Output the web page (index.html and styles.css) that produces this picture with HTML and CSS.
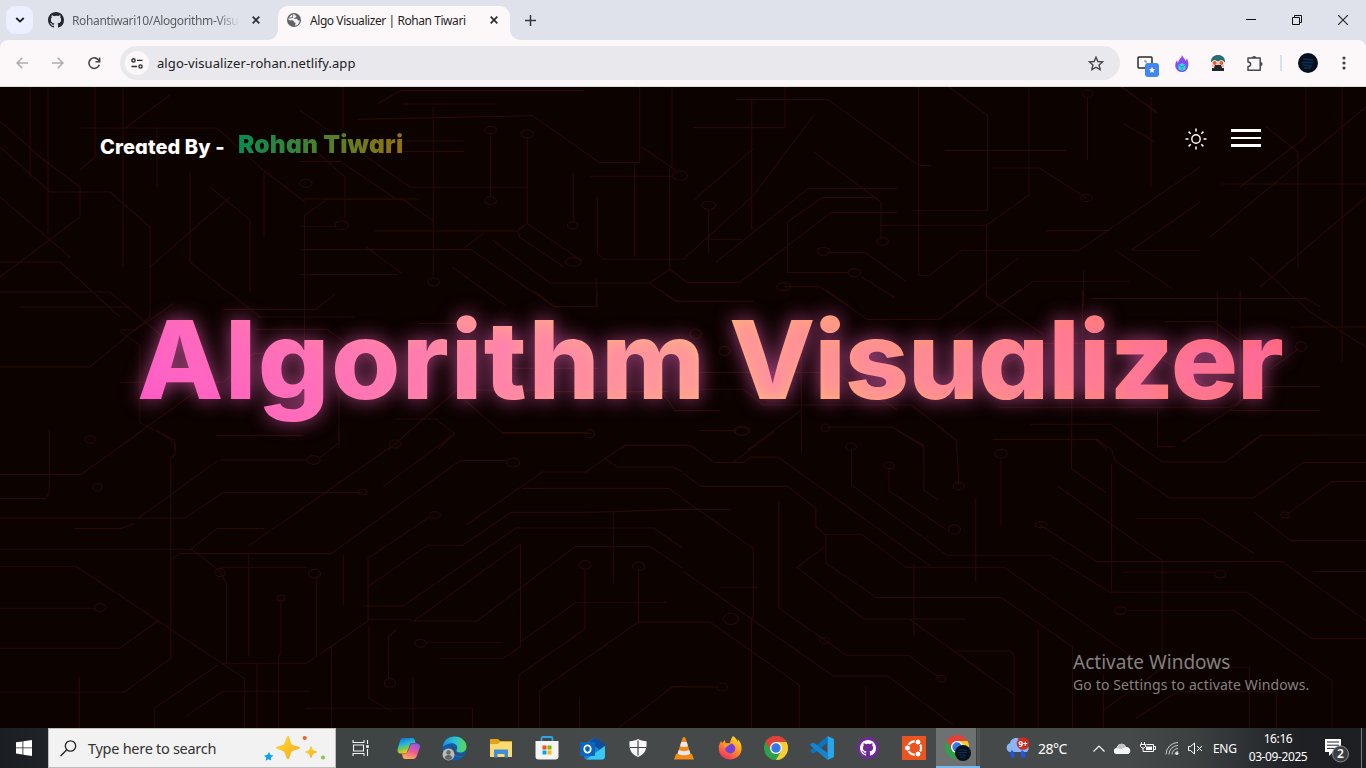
FILE: index.html
```html
<!DOCTYPE html>
<html lang="en">
<head>
<meta charset="utf-8">
<title>Algo Visualizer | Rohan Tiwari</title>
<link rel="stylesheet" href="styles.css">
</head>
<body>
<svg class="defs" width="0" height="0">
  <symbol id="chrome" viewBox="0 0 24 24">
    <circle cx="12" cy="12" r="12" fill="#2da04a"/>
    <path d="M1.6 6A12 12 0 0 1 22.4 6L12 12z" fill="#df4237"/><path d="M1.6 6L7 15l5-3V6z" fill="#df4237"/>
    <path d="M22.4 6A12 12 0 0 1 12 24l5.2-9L12 6z" fill="#fbcb35"/><path d="M12 6h10.4L12 12z" fill="#fbcb35"/>
    <path d="M1.6 6A12 12 0 0 1 22.4 6H12z" fill="#df4237"/>
    <circle cx="12" cy="12" r="6" fill="#fff"/><circle cx="12" cy="12" r="4.7" fill="#3478e8"/>
  </symbol>
  <symbol id="github" viewBox="0 0 16 16"><path fill-rule="evenodd" d="M8 0C3.58 0 0 3.58 0 8c0 3.54 2.29 6.53 5.47 7.59.4.07.55-.17.55-.38 0-.19-.01-.82-.01-1.49-2.01.37-2.53-.49-2.69-.94-.09-.23-.48-.94-.82-1.13-.28-.15-.68-.52-.01-.53.63-.01 1.08.58 1.23.82.72 1.21 1.87.87 2.33.66.07-.52.28-.87.51-1.07-1.78-.2-3.64-.89-3.64-3.95 0-.87.31-1.59.82-2.15-.08-.2-.36-1.02.08-2.12 0 0 .67-.21 2.2.82A7.65 7.65 0 0 1 8 3.86c.68 0 1.36.09 2 .27 1.53-1.04 2.2-.82 2.2-.82.44 1.1.16 1.92.08 2.12.51.56.82 1.27.82 2.15 0 3.07-1.87 3.75-3.65 3.95.29.25.54.73.54 1.48 0 1.07-.01 1.93-.01 2.2 0 .21.15.46.55.38A8.01 8.01 0 0 0 16 8c0-4.42-3.58-8-8-8z"/></symbol>
  <symbol id="avatar" viewBox="0 0 20 20"><circle cx="10" cy="10" r="10" fill="#07101d"/><path d="M5 6l10 1M4 9.500h11M5 12l9 1M6 15h7" stroke="#0c3157" stroke-width="1.300" fill="none"/></symbol>
</svg>

<header class="tabstrip">
  <div class="tab-search"><svg width="10" height="6" viewBox="0 0 10 6"><path d="M1.3 1l3.7 3.6L8.7 1" fill="none" stroke="#1b1b1f" stroke-width="1.8"/></svg></div>
  <div class="tab inactive">
    <svg class="fav" width="16" height="16"><use href="#github" fill="#24292f"/></svg>
    <span class="tab-title fade">Rohantiwari10/Alogorithm-Visu</span>
    <svg class="close" width="8" height="8" viewBox="0 0 8 8"><path d="M.7.7l6.6 6.6M7.3.7L.7 7.3"/></svg>
  </div>
  <div class="tab active">
    <svg class="fav" width="14" height="14" viewBox="0 0 14 14"><circle cx="7" cy="7" r="7" fill="#5f6368"/><path d="M7 1.2c2 .4 1 1.5 2.4 2.1.2 1.6-1.8 1-2.6 2 .8 1.1 3-.2 3.6 1.3.6 1 1.2.9 2.2.8.2 2.5-2 5-4.500 5.300C8 11 9 10.500 8.400 9.700 7 9.500 6.600 8.800 6.700 7.700 5.500 7.300 4 7.600 1.500 6.900 1.600 4.500 3 1.700 7 1.200z" fill="#f3f1f3"/><path d="M5.500 1.500c1 1-.8 1.600.4 2.600C4.500 5.500 3 4.500 2 5" stroke="#5f6368" fill="none"/></svg>
    <span class="tab-title">Algo Visualizer | Rohan Tiwari</span>
    <svg class="close" width="8" height="8" viewBox="0 0 8 8"><path d="M.7.7l6.600 6.600M7.300.7L.7 7.300"/></svg>
  </div>
  <svg class="newtab" width="11" height="11" viewBox="0 0 11 11"><path d="M5.500 0v11M0 5.500h11" stroke="#36383d" stroke-width="1.500"/></svg>
  <div class="window-controls">
    <svg width="10" height="10"><path d="M0 4.500h10" stroke="#111"/></svg>
    <svg width="10" height="10" fill="none" stroke="#111"><path d="M.5 2.500h7v7h-7zM2.500 2.500v-2h7v7h-2"/></svg>
    <svg width="10" height="10"><path d="M0 0l10 10M10 0L0 10" stroke="#222" stroke-width="1.100"/></svg>
  </div>
</header>

<nav class="toolbar">
  <svg class="nav-back" width="12" height="12" viewBox="0 0 12 12"><path d="M12 6H1M6.300.7L1 6l5.300 5.300" fill="none" stroke="#adabae" stroke-width="1.500"/></svg>
  <svg class="nav-fwd" width="12" height="12" viewBox="0 0 12 12"><path d="M0 6h11M5.700.7L11 6l-5.300 5.300" fill="none" stroke="#adabae" stroke-width="1.500"/></svg>
  <svg class="nav-reload" width="13" height="13" viewBox="0 0 13 13"><path d="M11.300 7.700A5.300 5.300 0 1 1 10.800 3.400L12 4.700" fill="none" stroke="#44464b" stroke-width="1.600"/><path d="M12.400.4v5H7.500V4h3.400V.4z" fill="#44464b"/></svg>
  <div class="omnibox">
    <div class="site-info"><svg width="12" height="11" viewBox="0 0 12 11" fill="none" stroke="#2b2c30" stroke-width="1.400"><circle cx="2.500" cy="2.400" r="1.600"/><path d="M6 2.400h5.500M.5 8.500H6"/><circle cx="9.500" cy="8.500" r="1.600"/></svg></div>
    <span class="url">algo-visualizer-rohan.netlify.app</span>
    <svg class="star" width="16" height="15" viewBox="0 0 16 15"><path d="M8 1.200l1.900 4.300 4.700.4-3.500 3.100 1 4.600L8 11.200l-4.100 2.400 1-4.600L1.400 5.900l4.700-.4z" fill="none" stroke="#434549" stroke-width="1.400"/></svg>
  </div>
  <div class="extensions">
    <svg width="22" height="22" viewBox="0 0 22 22"><rect x="1" y="3" width="14" height="11" rx="1" fill="none" stroke="#252b29" stroke-width="1.500"/><path d="M7 7h2v2" stroke="#777" fill="none"/><rect x="8" y="9" width="14" height="14" rx="3" fill="#4285f4"/><path d="M15 13l.9 2.100 2.200.2-1.700 1.500.5 2.200-1.900-1.200-1.900 1.200.5-2.200-1.700-1.500 2.200-.2z" fill="#fff"/></svg>
    <svg width="14" height="17" viewBox="0 0 14 17"><path d="M7 0c1 3 3 3 3.500 6 1-1 1-2 1.500-3 .5 3 2 4 1.200 8C12.600 15 10 17 7 17S1 15 .3 11.500C0 9 1 7 1.700 5.500 2.500 6 2.300 7 3 8 3.500 4 6.500 3.500 7 0z" fill="#8a4cf2"/><path d="M7 8l3.600 2v4L7 16.200 3.400 14v-4z" fill="#35d7da"/><path d="M3.400 10L7 12v4.200M7 12l3.600-2" stroke="#269bca" fill="none"/></svg>
    <svg width="14" height="16" viewBox="0 0 14 16"><path d="M0 7C0 2 3 0 7 0s7 2 7 7z" fill="#276d77"/><path d="M1 6h12v6H1z" fill="#efb294"/><circle cx="3.700" cy="8" r="2.500" fill="#f0582c" stroke="#eee"/><circle cx="10.300" cy="8" r="2.500" fill="#f0582c" stroke="#eee"/><path d="M4 10h6l1 3h2v3H1v-3h2z" fill="#1f2629"/></svg>
    <svg width="16" height="17" viewBox="0 0 16 17"><path d="M1 3h12.200v12.300H1v-3.800c3.500.2 3.500-4.500 0-4.500z" fill="none" stroke="#45474c" stroke-width="1.500" stroke-linejoin="round"/><path d="M5 3a2.100 2.100 0 0 1 4.200 0zM13.500 7a2.100 2.100 0 0 1 0 4.200z" fill="#45474c"/></svg>
  </div>
  <i class="divider"></i>
  <svg class="profile" width="20" height="20"><use href="#avatar"/></svg>
  <svg class="kebab" width="4" height="14" fill="#3f4146"><circle cx="2" cy="2" r="1.600"/><circle cx="2" cy="7" r="1.600"/><circle cx="2" cy="12" r="1.600"/></svg>
</nav>

<main class="page">
  <svg class="circuit" width="1366" height="641" viewBox="0 0 1366 641">
    <g transform="translate(0 343) scale(.4356 .3333)">
      <path d="M0 133H186L328 0M113 0V190L104 206H0M358 0L392 30 402 40V75L392 82V685L285 787H0M495 16H695M778 0V38L735 82M505 90H705M500 92L318 264M0 264H424L512 188H832M170 296H275L310 280M0 358H440L505 425 520 460V700M437 358L498 296H610M568 350L900 48M410 371H760L1057 91H1163M0 409H175L562 746V894M0 535H218M0 655H275L365 570M392 390L410 371M505 412H705M571 370V680M640 894V680L645 670V510M727 445V680L703 700H512M590 700V894M182 894V740M354 894V835L500 705M735 672L845 572V384L985 262M845 470L982 346H1062L1173 247H1350L1568 238M1070 285L1245 126H1345L1433 46H1568M1390 88L1418 111H1545L1568 125M1200 175H1535L1568 205M845 568H940L945 573H1095L1320 350H1492L1568 415M950 573L1195 342V650L1155 685H1010M835 528H925L1185 294H1500L1568 355M892 745V620L910 598M847 585V805L900 845M978 637H1155M1343 418V597L1191 735V894M1466 420V576H1568M1466 576L1239 782V894M1195 635L1323 517H1530M1408 245V460M1568 770H1545L1420 894M425 860L512 784H710M700 835H1085V894M761 650V894M948 745V894M1330 805V894M1150 8H1350M880 170L1045 10M788 375V525"/>
      <ellipse cx="907" cy="42" rx="14" ry="12"/><ellipse cx="1178" cy="98" rx="15" ry="13"/><ellipse cx="720" cy="90" rx="15" ry="13"/><ellipse cx="998" cy="255" rx="13" ry="10"/><ellipse cx="1343" cy="405" rx="14" ry="13"/><ellipse cx="1466" cy="409" rx="14" ry="13"/><ellipse cx="722" cy="431" rx="14" ry="13"/><ellipse cx="230" cy="533" rx="13" ry="12"/><ellipse cx="965" cy="640" rx="13" ry="12"/><ellipse cx="207" cy="28" rx="12" ry="11"/><ellipse cx="224" cy="172" rx="11" ry="11"/><ellipse cx="895" cy="759" rx="13" ry="13"/><ellipse cx="645" cy="504" rx="9" ry="9"/><ellipse cx="505" cy="428" rx="12" ry="12"/><ellipse cx="832" cy="186" rx="10" ry="9"/>
    </g>
    <g transform="translate(683 343) scale(.4356 .3333)">
      <path d="M0 45H15L72 97H115L210 5M115 97H140L155 81H218L570 410M0 130L42 169H240L305 235V290L328 315V400L445 503H730L894 650V894M0 238H110M0 207L161 355V560L157 570V894M220 215V535L375 676H517L590 745M0 424L345 738H470L620 885M0 576H62L267 765V894M272 0V65M387 62V165L607 376H843L980 487H1295L1445 626H1568M473 115V182L605 300M490 0L553 50V180L585 210M595 0L628 30 633 165M730 85V285M672 205V455M325 313H410L512 412H737L1030 680M325 350L262 412 415 567H650M520 568L760 793V894M620 663H750L760 675V793M715 28H950L985 60 990 90 1117 204H1310L1425 97H1568M1000 0L1100 96H1245L1325 15H1568M892 0V117L970 187M860 168L1100 392V715L965 840M984 100V487M820 285L950 395H1375L1568 572M1040 265H1190L1310 370M1010 427H1220M1020 541H1265L1490 752V894M1385 255L1490 155H1568M1310 245L1395 332H1568M1040 865L1135 785H1363V894M965 735V894M815 600V894M0 771H78M420 770V894M530 400V620M1110 712H1300V894M1145 35L1190 0M1448 425H1568M85 472H170"/>
      <ellipse cx="135" cy="4" rx="16" ry="12"/><ellipse cx="386" cy="51" rx="12" ry="12"/><ellipse cx="473" cy="106" rx="12" ry="10"/><ellipse cx="730" cy="71" rx="14" ry="13"/><ellipse cx="623" cy="298" rx="14" ry="14"/><ellipse cx="110" cy="567" rx="17" ry="17"/><ellipse cx="1233" cy="432" rx="13" ry="12"/><ellipse cx="1004" cy="542" rx="13" ry="12"/><ellipse cx="90" cy="771" rx="12" ry="12"/><ellipse cx="593" cy="746" rx="10" ry="10"/><ellipse cx="633" cy="168" rx="13" ry="11"/><ellipse cx="326" cy="632" rx="12" ry="10"/><ellipse cx="1382" cy="255" rx="10" ry="9"/><ellipse cx="822" cy="284" rx="14" ry="9"/>
    </g>
    <g transform="translate(300) scale(.574 .3333)">
      <path d="M135 50L175 11H495M180 51H340M75 0V145M0 70L192 301H395M100 97L405 86 522 227H592V0M232 60V570M332 140V330M396 150V410L380 430 382 450 460 540M396 410L490 520M0 488H298L442 658M285 485L320 438M0 563H170M8 658V385L47 337H180L232 402M0 223H70L165 333M476 260V405M505 268H650M648 0V235L644 245V547L675 587H765L925 377H1040M595 180L655 250M583 230V510M518 330V500L530 517H668L790 325 895 85M787 40V430M685 122H845V0M760 38H920L1078 235H1100M685 340L790 185M895 195L1012 345V455M712 368V500M708 457H770M725 525L885 305H1040M849 555V405L910 332H1005M1010 415H1196L1270 324V0M1130 0L1198 85V370H1065M1078 0V565L1095 567 1153 490H1357L1568 240M1372 30V220M1205 243H1288L1370 333M1123 190H1335M1196 415V625L1218 658M1218 655L1278 583H1445M1142 658L1250 515M849 557H955M920 497H985L1055 582M845 599H905L955 658M978 570L1035 630M644 547L608 588 655 643H790M608 588H435L335 458M516 658V575M1448 490L1568 345M1420 490L1520 605M1448 490H1568M1365 550V658M1430 0L1493 75M1435 110L1490 165M1300 431H1410M130 432H380M115 480L178 560M265 540L360 658M0 418H60M180 162H285M180 193H285"/>
      <ellipse cx="332" cy="129" rx="10" ry="11"/><ellipse cx="396" cy="141" rx="11" ry="12"/><ellipse cx="332" cy="341" rx="10" ry="12"/><ellipse cx="73" cy="415" rx="12" ry="13"/><ellipse cx="233" cy="585" rx="10" ry="12"/><ellipse cx="662" cy="266" rx="13" ry="14"/><ellipse cx="712" cy="355" rx="12" ry="12"/><ellipse cx="966" cy="557" rx="11" ry="12"/><ellipse cx="912" cy="493" rx="11" ry="12"/><ellipse cx="843" cy="599" rx="12" ry="12"/><ellipse cx="476" cy="525" rx="14" ry="13"/><ellipse cx="475" cy="415" rx="9" ry="11"/><ellipse cx="1370" cy="333" rx="10" ry="11"/><ellipse cx="1372" cy="20" rx="9" ry="11"/><ellipse cx="10" cy="289" rx="11" ry="12"/><ellipse cx="1015" cy="463" rx="10" ry="12"/>
    </g>
    <path d="M0 34L40 70 80 100V130L0 190M48 0V147M95 0V70L80 83M123 0V180M80 41H217L262 82 305 115M125 41L170 8M157 40V100M0 60L50 105H110L150 140V190M0 175H60L120 230M0 110L70 170M300 50L345 90V130M0 205H110L175 260M190 85V175L260 230H355M210 100L250 133V205M30 0V90M0 280H90L150 230V180L230 110M20 220H130M304 112H420M264 85V150"/>
    <g transform="translate(120 203) scale(.3827 .3333)"><path d="M0 277H270L350 190H480M0 120H40L140 40M0 125L52 165V398L143 450V480M0 470L215 290M270 58H510L560 15M482 0V340M350 118H540L720 260M572 475V310M250 437H480M700 480L880 300H1130M720 387H825L875 430M830 480L875 430M900 330L1000 430H1230M1310 480L1320 466H1490L1510 480M1140 305H1430M980 200L1030 235H1250M1450 362L1390 260M1450 362H1568M1080 0L1135 50H1247V0M1410 0L1455 34H1568M780 100H920"/><circle cx="1228" cy="431" r="12"/><circle cx="1504" cy="132" r="15"/></g>
    <g transform="translate(700 203) scale(.3954 .3333)"><path d="M0 34H135M0 298H110L160 345H535L648 450V480M256 150V480M120 480L256 360M0 422H90M320 411H485L565 465V480M320 0L422 88H605L705 0M723 0V18L870 135M810 0L645 140M967 0V190M990 25H1533L1568 50M1308 0V220M1366 0V340L1220 455M1175 95H1300L1420 200M0 247H340L500 360M755 352H1340L1430 290H1568M1340 362H1568M940 230V480M835 403H1040L1125 480M740 448H1000L1030 480M1157 362V470H1200M1370 480L1420 436H1568M645 300L870 160H1100L1300 300M1440 240L1515 175"/><ellipse cx="106" cy="422" rx="20" ry="14"/><circle cx="62" cy="183" r="14"/><circle cx="1520" cy="170" r="14"/><circle cx="317" cy="413" r="11"/></g>
    <path d="M1240 100L1306 50V0M1265 39L1298 65V180M1222 97H1366M1342 0V275M1151 10V100M1122 0L1157 26M1210 150L1366 20M1260 200L1366 110M1290 240H1366M1250 170L1310 225 1366 260"/>
  </svg>

  <div class="page-head">
    <div class="credit"><span class="by">Created By -</span><span class="author">Rohan Tiwari</span></div>
    <div class="page-tools">
      <svg width="22" height="22" viewBox="0 0 22 22" fill="none" stroke="#fff"><circle cx="11" cy="11" r="4.200" stroke-width="1.400"/><path d="M11 .5v3M11 18.500v3M.5 11h3M18.500 11h3M3.600 3.600l2.100 2.100M16.300 16.300l2.100 2.100M3.600 18.400l2.100-2.100M16.300 5.700l2.100-2.100" stroke-width="1.500"/></svg>
      <div class="burger"><i></i><i></i><i></i></div>
    </div>
  </div>
  <h1 class="hero"><span class="w1">Algorithm</span> <span class="w2">Visualizer</span></h1>
  <div class="activate"><p class="act-title">Activate Windows</p><p class="act-sub">Go to Settings to activate Windows.</p></div>
</main>

<footer class="taskbar">
  <div class="start"><svg width="16" height="16" viewBox="0 0 16 16" fill="#fff"><path d="M0 2.300l6.500-.9v6.100H0zM7.300 1.300L16 0v7.500H7.300zM0 8.300h6.500v6.200L0 13.600zM7.300 8.300H16V16l-8.700-1.300z"/></svg></div>
  <div class="search">
    <svg width="17" height="17" viewBox="0 0 17 17" fill="none" stroke="#222" stroke-width="1.300"><circle cx="10.500" cy="6" r="5.200"/><path d="M6.800 9.700L.6 16"/></svg>
    <span>Type here to search</span>
    <svg class="sparkles" width="62" height="26" viewBox="0 0 62 26"><defs><linearGradient id="gold" x2="1" y2="1"><stop stop-color="#ffdc3c"/><stop offset="1" stop-color="#f3a718"/></linearGradient></defs><path d="M24 1c1.600 0 2.200 6 3.600 8s8.400 2.200 8.400 3.700-7 2.300-8.400 4-2 7.600-3.600 7.600-2.500-6-4-7.600-8-2.300-8-4 6.500-1.700 8-3.700 2.400-8 4-8z" fill="url(#gold)"/><path d="M47 11c1 0 1 3 2 4s4 1.200 4 2.100-3 1.200-4 2.200-1 3.700-2 3.700-1.200-3-2.100-3.900-3.900-1-3.900-2 3-1 4-2 1-4.100 2-4.100z" fill="url(#gold)"/><path d="M5 17l1.500 3 3 .5-2.500 2 .2 3-2.700-1.300-3 1.600.8-3.100L0 20.500l3.200-.5z" fill="#08a5ee"/><circle cx="40.700" cy="3" r="2.100" fill="#f2622e"/><circle cx="59" cy="22.500" r="2" fill="#8bc34a"/></svg>
  </div>
  <div class="taskview"><svg width="18" height="16" viewBox="0 0 18 16" fill="none" stroke="#f2f2f2" stroke-width="1.100"><path d="M1 0v2.500h11V0M1 16v-2.500h11V16M1.500 5h10v6h-10zM15.500 0v4M15.500 9v7"/><path d="M14.200 5.200h2.600v2.600h-2.600z" fill="#fff" stroke="none"/></svg></div>
  <div class="apps">
    <div class="app"><svg width="23" height="21" viewBox="0 0 23 21"><defs><linearGradient id="cp1" x2=".3" y2="1"><stop stop-color="#1b62d8"/><stop offset=".45" stop-color="#21b8dc"/><stop offset=".75" stop-color="#85c945"/><stop offset="1" stop-color="#f5c820"/></linearGradient><linearGradient id="cp2" x1=".7" y1="0" x2=".3" y2="1"><stop stop-color="#9a55e8"/><stop offset=".5" stop-color="#ef5b92"/><stop offset="1" stop-color="#ffb152"/></linearGradient></defs><path d="M6 0h9c2 0 2.600 1 3 3l.5 2h-3c-2 0-2.500 1-3 3L10 14c-.5 1-1 1.500-3 1.500H4C1 15.500 0 13.500.8 10.500L3 3C3.500 1 4.500 0 6 0z" fill="url(#cp1)"/><path d="M17 5.500h2.500c3 0 4 2 3 5L20 17.500c-.8 2.400-2 3.500-4 3.500H8.500C6.500 21 6 20 5.500 18L5 15.700h2.500c2 0 3-1 3.500-3L13.500 7c.5-1.200 1.500-1.500 3.500-1.500z" fill="url(#cp2)"/></svg></div>
    <div class="app"><svg width="25" height="25" viewBox="0 0 25 25"><defs><linearGradient id="ed" y1=".3" x2="1" y2=".4"><stop stop-color="#1c8ed9"/><stop offset=".5" stop-color="#2bc3d4"/><stop offset="1" stop-color="#5bd657"/></linearGradient></defs><circle cx="12.500" cy="12.500" r="12" fill="#0f5cae"/><path d="M.8 11C1.500 4.500 6 .5 12.500.5c7 0 12 5 12 10 0 4-3 6-6.500 6-3 0-4-1-3.300-2.500C17 9 12 6.500 8 7.500 4 8 2 10 .8 11z" fill="url(#ed)"/><path d="M9 11c-2 6 3 11 9 10.500 3 0 5-2 6-4-4 2-11 1.500-11-3.500 0-3-2.500-4-4-3z" fill="#3d464c"/><path d="M9 11c-2 6 3 11 9 10.500 2 0 4-1 5-2.500-6 2-12 0-11.500-4z" fill="#126dbf"/><circle cx="6.500" cy="18.500" r="6" fill="#b9babb"/><circle cx="6.500" cy="16.500" r="2.200" fill="#666"/><path d="M2.800 22c0-4 7.400-4 7.400 0-2 2.500-5.500 2.500-7.400 0z" fill="#666"/></svg></div>
    <div class="app"><svg width="22" height="19" viewBox="0 0 22 19"><path d="M0 1c0-1 0-1 1-1h7l2 2h12v4H0z" fill="#e2a416"/><path d="M0 5h8l2-2h12v15H0z" fill="#fddb73"/><path d="M4 18.500v-8h14v8h-3.500V15h-7v3.500z" fill="#3d90d4"/></svg></div>
    <div class="app"><svg width="24" height="24" viewBox="0 0 24 24"><path d="M6.500 7V2.500c0-1 .6-1.500 1.500-1.500h8c1 0 1.500.5 1.500 1.500V7" fill="none" stroke="#27a9e1" stroke-width="1.800"/><path d="M.5 5h23v15.500a3 3 0 0 1-3 3h-17a3 3 0 0 1-3-3z" fill="#f4f4f4"/><path d="M7.500 9.500h4v4h-4z" fill="#f25022"/><path d="M12.500 9.500h4v4h-4z" fill="#7fba00"/><path d="M7.500 14.500h4v4h-4z" fill="#00a4ef"/><path d="M12.500 14.500h4v4h-4z" fill="#ffb900"/></svg></div>
    <div class="app"><svg width="25" height="23" viewBox="0 0 25 23"><path d="M4 7.500L15 .5l10 7V19c0 2-1 3.500-3 3.500H7c-2 0-3-1.500-3-3z" fill="#1583d3"/><path d="M9 5l11 8 5-4V7L15 .5z" fill="#0c4fa1"/><path d="M6 22.500L25 9v10c0 2-1 3.500-3 3.500z" fill="#3bc8f0"/><rect y="5" width="15" height="14" rx="1" fill="#0b64bd"/><ellipse cx="7.500" cy="12" rx="3.200" ry="3.700" fill="none" stroke="#fff" stroke-width="1.800"/></svg></div>
    <div class="app"><svg width="18" height="18" viewBox="0 0 18 18"><path d="M9 0c2.500 1.500 5 2 8.500 2.300C18 10 16.500 15 9 18 1.500 15 0 10 .5 2.300 4 2 6.500 1.500 9 0z" fill="#f7f7f7"/><path d="M9 1.500v15M1 8.500h16" stroke="#444848" stroke-width="1.200"/></svg></div>
    <div class="app"><svg width="20" height="23" viewBox="0 0 20 23"><path d="M2 17h16l2 5.500H0z" fill="#f68b13"/><path d="M8.500 1c.5-1.300 2.500-1.300 3 0L17 18c-3 2.500-11 2.500-14 0z" fill="#f28714"/><path d="M7.300 5h5.400l1.300 4.200c-2 1-6 1-8 0zM4.800 13c3 1.500 7.400 1.500 10.400 0l1.200 3.700c-4 2-8.800 2-12.800 0z" fill="#e9e9e9"/></svg></div>
    <div class="app"><svg width="24" height="24" viewBox="0 0 24 24"><defs><linearGradient id="ff" x1=".8" x2=".2" y2="1"><stop stop-color="#ffe226"/><stop offset=".45" stop-color="#ff9420"/><stop offset="1" stop-color="#f52668"/></linearGradient></defs><path d="M15 0c3 2 4 4 5 6 0-1 0-2-.3-3C23 6 24 10 23.500 14c-1 6-6 9.500-11 9.500C6 23.500.5 19 .7 12 .8 9 2 7 3 5l1 2 3-3 .5 3 4 .5C13 5 13 2 15 0z" fill="url(#ff)"/><circle cx="12.300" cy="12.500" r="5" fill="#7541de"/><path d="M6 8l7-1c-1 3-4 2-4.500 4.500C5.500 12 5 10 6 8z" fill="#ff9924"/></svg></div>
    <div class="app"><svg width="24" height="24"><use href="#chrome"/></svg></div>
    <div class="app"><svg width="24" height="24" viewBox="0 0 24 24"><path d="M17.500 0L24 3v18l-6.500 3z" fill="#27a6ee"/><path d="M17.500 0v7L3.500 17.600.3 16v-1.300z" fill="#0876bd"/><path d="M17.500 24v-7L3.500 6.400.3 8v1.300z" fill="#1684d1"/></svg></div>
    <div class="app"><svg width="22" height="22" viewBox="0 0 22 22"><circle cx="11" cy="11" r="11" fill="#6f2b94"/><svg x="3" y="3" width="16" height="16"><use href="#github" fill="#fff"/></svg></svg></div>
    <div class="app"><svg width="24" height="24" viewBox="0 0 24 24"><path d="M0 0h24v24H0z" fill="#e95420"/><circle cx="12.500" cy="12" r="6.600" fill="none" stroke="#fff" stroke-width="2.200"/><g fill="#fff" stroke="#e95420" stroke-width="1"><circle cx="5.500" cy="12" r="3"/><circle cx="16" cy="6" r="3"/><circle cx="16" cy="18" r="3"/></g></svg></div>
    <div class="app current"><svg width="26" height="26" viewBox="0 0 26 26"><use href="#chrome" width="24" height="24"/><use href="#avatar" x="10" y="10" width="16" height="16"/></svg></div>
  </div>
  <div class="weather"><svg width="26" height="22" viewBox="0 0 26 22"><path d="M4 15a5 5 0 0 1 1-9c1-6 10-7 12-1 5-1 9 6 5 10z" fill="#8cb5f8"/><path d="M7 13c3 3 4 8 1 8S4 16 7 13zM17 13c4 3 5 8 2 8s-5-4-2-8z" fill="#1d56e0"/><circle cx="18" cy="6.500" r="6.300" fill="#cb2b20"/><text x="18" y="9.600" text-anchor="middle" class="badge-text">9+</text></svg><span>28°C</span></div>
  <div class="tray">
    <svg width="12" height="7" viewBox="0 0 12 7"><path d="M.5 6.500L6 1l5.500 5.500" fill="none" stroke="#fff" stroke-width="1.200"/></svg>
    <svg width="17" height="11" viewBox="0 0 17 11"><path d="M3 11a3 3 0 0 1-.5-6C4 0 10-1 12 4c4-.5 6 4.500 2.500 7z" fill="#f5f5f5"/><path d="M2.500 5C4 0 10-1 12 4L7 6z" fill="#c4c4c4"/></svg>
    <svg width="16" height="12" viewBox="0 0 16 12" fill="none" stroke="#fff"><path d="M6.500 2.500h7v7h-8M14 4.500h1.500v3H14"/><path d="M6 4.500h6v3.500H6z" fill="#fff" stroke="none"/><path d="M1.500 0v2M4.500 0v2M.5 2.500h5v2L4 6H2L.5 4.500zM3 6v3.500h3"/></svg>
    <svg width="14" height="14" viewBox="0 0 14 14" fill="none" stroke="#ccc"><path d="M1 13.500A12 12 0 0 1 13 1.500M4 13.500a9 9 0 0 1 9-9M7 13.500a6 6 0 0 1 6-6M10 13.500a3 3 0 0 1 3-3"/><circle cx="12" cy="12.500" r="1.200" fill="#fff"/></svg>
    <svg width="15" height="13" viewBox="0 0 15 13" fill="none" stroke="#fff"><path d="M.5 4.500h2L6.500 1v11L2.500 8.500h-2zM9 4l5 5M14 4L9 9"/></svg>
    <span class="lang">ENG</span>
    <div class="clock"><span class="time">16:16</span><span class="date">03-09-2025</span></div>
    <svg class="notify" width="26" height="26" viewBox="0 0 26 26"><path d="M1 1h16v13H9l-4 4v-4H1z" fill="#fff"/><path d="M3 4h12M3 7.200h12M3 10.400h8" stroke="#23262b"/><circle cx="16.500" cy="16" r="8" fill="#3c3e41" stroke="#8a8b8d"/><text x="16.500" y="20" text-anchor="middle" class="count">2</text></svg>
    <i class="peek"></i>
  </div>
</footer>
</body>
</html>
```
FILE: styles.css
```css
* { box-sizing: border-box; }
body { margin: 0; width: 1366px; height: 768px; overflow: hidden; display: flex; flex-direction: column; font-family: "Noto Sans", "Open Sans", sans-serif; font-size: 12px; }
svg { display: block; flex: none; }
.defs { position: absolute; }

.tabstrip { height: 40px; flex: none; background: #dfe2eb; display: flex; align-items: center; padding-left: 6px; }
.tab-search { width: 27px; height: 28px; border-radius: 9px; background: #ecefff; display: grid; place-items: center; }
.tab { display: flex; align-items: center; white-space: nowrap; }
.inactive { width: 237px; padding-left: 15px; color: #5b5d63; }
.active { width: 232px; height: 34px; align-self: flex-end; margin-left: 8px; padding: 0 0 6px 9px; color: #1f1f22; background: #fcf8f9; border-radius: 10px 10px 0 0; position: relative; }
.active::before, .active::after { content: ""; position: absolute; bottom: 0; width: 10px; height: 10px; }
.active::before { left: -10px; background: radial-gradient(circle at 0 0, transparent 9.500px, #fcf8f9 10px); }
.active::after { right: -10px; background: radial-gradient(circle at 100% 0, transparent 9.500px, #fcf8f9 10px); }
.tab-title { margin-left: 8px; width: 168px; overflow: hidden; font-size: 12px; }
.inactive .tab-title { letter-spacing: -.37px; }
.active .tab-title { margin-left: 9px; width: 172px; letter-spacing: -.43px; }
.fade { -webkit-mask-image: linear-gradient(90deg, #000 86%, transparent); mask-image: linear-gradient(90deg, #000 86%, transparent); }
.close { margin-left: 12px; stroke: #2c2d31; stroke-width: 1.700; fill: none; }
.active .close { margin-left: 8px; }
.newtab { margin-left: 15px; }
.window-controls { margin-left: auto; display: flex; gap: 36px; padding-right: 18px; }

.toolbar { height: 47px; flex: none; background: #fcf8f9; border-bottom: 1px solid #dedde1; display: flex; align-items: center; padding-left: 16px; box-shadow: 0 -6px 0 -0px #dfe2eb; border-radius: 8px 8px 0 0; }
.nav-fwd { margin-left: 24px; }
.nav-reload { margin-left: 24px; }
.omnibox { margin-left: 19px; width: 1000px; height: 34px; border-radius: 17px; background: #e9e8ed; display: flex; align-items: center; padding-left: 5px; }
.site-info { width: 24px; height: 24px; border-radius: 50%; background: #fcf8f9; display: grid; place-items: center; }
.url { margin-left: 8px; font-size: 13px; color: #202124; letter-spacing: .08px; white-space: nowrap; }
.star { margin-left: auto; margin-right: 16px; }
.extensions { margin-left: 17px; display: flex; align-items: center; gap: 18px; width: 126px; }
.extensions svg:first-child { margin: 3px -1px 0 0; overflow: visible; }
.extensions svg:nth-child(2) { margin-left: -1px; }
.extensions svg:nth-child(3) { margin-left: 4px; }
.extensions svg:nth-child(4) { margin-left: 4px; }
.divider { width: 2px; height: 16px; background: #d3e2fb; margin-left: 17px; }
.profile { margin-left: 16px; }
.kebab { margin-left: 24px; }

.page { height: 641px; flex: none; background: #0c0200; position: relative; overflow: hidden; }
.circuit { position: absolute; inset: 0; fill: none; stroke: #250b03; stroke-width: 1.100; }
.circuit path, .circuit ellipse, .circuit circle { vector-effect: non-scaling-stroke; }
.page-head { position: relative; display: flex; justify-content: space-between; height: 100px; padding: 41px 105px 0 100px; }
.credit { display: flex; align-items: baseline; font-family: Inter, sans-serif; font-feature-settings: "cv11"; white-space: nowrap; height: 40px; margin-top: 2px; }
.by { color: #fff; font-weight: 800; font-size: 20px; letter-spacing: .1px; width: 138px; }
.author { font-weight: 900; font-size: 24.500px; letter-spacing: .2px; background: linear-gradient(90deg, #068d4f, #92720a); -webkit-background-clip: text; background-clip: text; color: transparent; position: relative; top: -1px; }
.page-tools { display: flex; gap: 24px; }
.burger { width: 30px; display: flex; flex-direction: column; gap: 5px; padding-top: 1px; }
.burger i { height: 2.700px; background: #fff; }
.hero { position: relative; margin: 98px 0 0 137px; width: 1102px; height: 150px; font: 800 108px/150px Inter, sans-serif; font-feature-settings: "cv11"; white-space: nowrap; word-spacing: -2px; background: linear-gradient(45deg, #ff4ecd, #ffc371 50%, #ff5f6d); -webkit-background-clip: text; background-clip: text; color: transparent; text-shadow: 0 0 20px rgba(255, 105, 200, .65); transform: scaleX(1.04); transform-origin: 0 50%; }
.w1 { letter-spacing: 1.250px; }
.w2 { letter-spacing: -1.250px; }
.activate { position: absolute; left: 1073px; top: 562px; color: #858180; white-space: nowrap; }
.activate p { margin: 0; }
.act-title { font-size: 19px; line-height: 26px; letter-spacing: .02px; }
.act-sub { font-size: 14px; line-height: 20px; letter-spacing: .13px; }

.taskbar { height: 40px; flex: none; background: linear-gradient(90deg, #1b1f24 0, #1f2327 48px, #3e4343 336px, #454949 600px, #454949 1130px, #3b3f40 1200px, #1e2024 1300px, #1c1e22); display: flex; align-items: center; color: #fff; }
.start { width: 48px; display: grid; place-items: center; }
.search { width: 288px; height: 40px; background: #f2f2f2; border: 1px solid #bdbdbd; display: flex; align-items: center; padding-left: 11px; color: #333; font-size: 14.500px; white-space: nowrap; }
.search span { margin-left: 11px; letter-spacing: -.28px; }
.sparkles { margin-left: auto; margin-right: 9px; }
.taskview { width: 50px; display: grid; place-items: center; }
.apps { display: flex; width: 605px; }
.app { width: 45.900px; height: 40px; flex: none; display: grid; place-items: center; }
.current { width: 44px; margin-left: -1px; padding-top: 2px; background: linear-gradient(90deg, #6e7172 0 40px, #3f4343 40px 41px, #515555 41px); border-bottom: 2px solid #76b9ed; }
.weather { margin-left: 14px; display: flex; align-items: center; gap: 7px; width: 86px; font-size: 14px; letter-spacing: -.5px; white-space: nowrap; }
.badge-text { font: 700 8px "Noto Sans", sans-serif; fill: #fff; letter-spacing: 0; }
.tray { display: flex; align-items: center; flex: 1; }
.tray > svg { margin-right: 9px; }
.tray > svg:first-child { margin-left: 2px; }
.lang { font-size: 12px; letter-spacing: -.3px; margin-left: 1px; width: 35px; }
.clock { display: flex; flex-direction: column; align-items: center; width: 60px; line-height: 18px; font-size: 12px; letter-spacing: -.4px; white-space: nowrap; }
.tray .notify { margin: 6px 0 0 16px; }
.count { font: 600 12px "Noto Sans", sans-serif; fill: #fff; }
.peek { width: 1px; height: 40px; background: #77797b; margin-left: auto; margin-right: 4px; }
```
